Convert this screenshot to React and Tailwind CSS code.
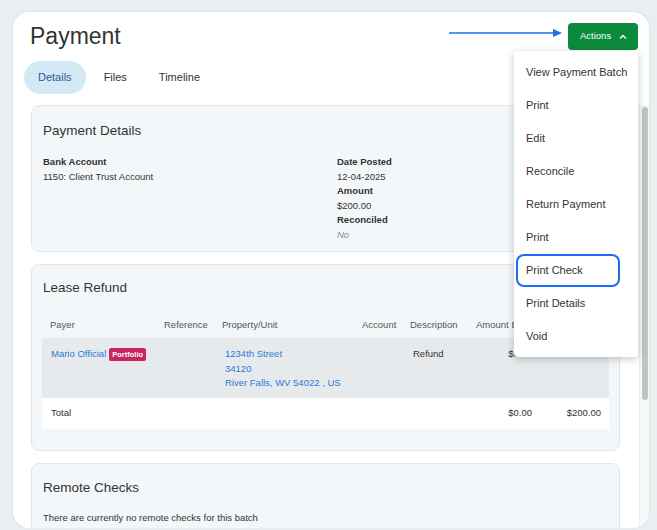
const menuItems = ['View Payment Batch', 'Print', 'Edit', 'Reconcile', 'Return Payment', 'Print', 'Print Check', 'Print Details', 'Void'];

const cols = 'grid grid-cols-[114px_58px_140px_48px_66px_72px_69px]';

export default function App() {
  return (
    <div className="w-[657px] h-[530px] bg-[#e9eef2] pt-[12px] pl-[13px] pr-[8px] font-['Liberation_Sans',Arial,sans-serif] text-[#333]">
      <div className="relative w-[636px] h-[516px] bg-white rounded-[16px] shadow-[0_0_3px_rgba(0,0,0,0.08)] flex flex-col overflow-hidden">
        <div className="flex items-start justify-between pl-[17px] pr-[11px] pt-[11px]">
          <h1 className="text-[23px] leading-[27px] text-[#333]">Payment</h1>
          <div className="flex items-start">
            <svg width="114" height="27" viewBox="0 0 114 27" className="mr-[5px]">
              <line x1="0" y1="10" x2="106" y2="10" stroke="#1f6cf0" strokeWidth="1.6" />
              <path d="M104 6 L113 10 L104 14 Z" fill="#1f6cf0" />
            </svg>
            <button className="h-[27px] w-[70px] rounded-[4px] bg-[#0b8a3d] text-white text-[9.5px] flex items-center pl-[12px]">
              Actions
              <svg width="8" height="6" viewBox="0 0 8 6" className="ml-[8px]">
                <path d="M1 4.5 L4 1.5 L7 4.5" fill="none" stroke="white" strokeWidth="1.3" />
              </svg>
            </button>
          </div>
        </div>

        <div className="flex gap-[4px] px-[11px] mt-[11px] text-[11px]">
          <div className="h-[33px] px-[14px] rounded-full bg-[#d4e8f5] text-[#2b5f93] flex items-center">Details</div>
          <div className="h-[33px] px-[14px] rounded-full flex items-center text-[#333]">Files</div>
          <div className="h-[33px] px-[14px] rounded-full flex items-center text-[#333]">Timeline</div>
        </div>

        <div className="flex flex-1 min-h-0 mt-[11px]">
          <div className="flex-1 min-w-0 overflow-hidden pl-[18px] pr-[19px] flex flex-col gap-[12px]">
            <section className="shrink-0 rounded-[8px] border border-[#e2e6ea] bg-[#f4f7fa] px-[11px] pt-[16px] pb-[9px]">
              <h2 className="text-[13.5px] leading-[18px]">Payment Details</h2>
              <div className="grid grid-cols-[294px_1fr] mt-[15px] text-[9.5px] leading-[14.5px]">
                <div>
                  <div className="font-bold">Bank Account</div>
                  <div>1150: Client Trust Account</div>
                </div>
                <div>
                  <div className="font-bold">Date Posted</div>
                  <div>12-04-2025</div>
                  <div className="font-bold">Amount</div>
                  <div>$200.00</div>
                  <div className="font-bold">Reconciled</div>
                  <div className="italic text-[#8a8a8a]">No</div>
                </div>
              </div>
            </section>

            <section className="shrink-0 rounded-[8px] border border-[#e2e6ea] bg-[#f4f7fa] px-[10px] pt-[14px] pb-[21px]">
              <h2 className="text-[13.5px] leading-[18px] pl-[1px]">Lease Refund</h2>
              <div className="mt-[15px] text-[9.5px]">
                <div className={`${cols} h-[26px] items-center text-[#555] whitespace-nowrap`}>
                  <div className="pl-[8px]">Payer</div>
                  <div className="pl-[8px]">Reference</div>
                  <div className="pl-[8px]">Property/Unit</div>
                  <div className="pl-[8px]">Account</div>
                  <div className="pl-[8px]">Description</div>
                  <div className="pl-[8px]">Amount Balance</div>
                  <div />
                </div>
                <div className={`${cols} h-[60px] bg-[#e7eaed] pt-[9px] leading-[14.5px]`}>
                  <div className="pl-[9px] flex items-start">
                    <span className="text-[#2a7ad5]">Mario Official</span>
                    <span className="ml-[3px] mt-[1px] h-[13px] px-[3px] rounded-[2px] bg-[#c9255e] text-white text-[7.5px] font-bold leading-[13px]">Portfolio</span>
                  </div>
                  <div />
                  <div className="pl-[11px] text-[#2a7ad5] whitespace-nowrap">
                    <div>1234th Street</div>
                    <div>34120</div>
                    <div>River Falls, WV 54022 , US</div>
                  </div>
                  <div />
                  <div className="pl-[11px]">Refund</div>
                  <div className="pr-[8px] text-right">$0.00</div>
                  <div />
                </div>
                <div className={`${cols} h-[31px] bg-white items-center`}>
                  <div className="pl-[9px]">Total</div>
                  <div />
                  <div />
                  <div />
                  <div />
                  <div className="pr-[8px] text-right">$0.00</div>
                  <div className="pr-[8px] text-right">$200.00</div>
                </div>
              </div>
            </section>

            <section className="shrink-0 rounded-[8px] border border-[#e2e6ea] bg-[#f4f7fa] px-[11px] pt-[15px] pb-[20px]">
              <h2 className="text-[13.5px] leading-[18px]">Remote Checks</h2>
              <p className="mt-[14px] text-[9.5px] leading-[14.5px]">There are currently no remote checks for this batch</p>
            </section>
          </div>

          <div className="w-[10px] shrink-0 bg-[#f8f8f8] border-l border-[#ececec] pt-[2px] pl-[2px]">
            <div className="w-[6px] h-[293px] rounded-full bg-[#c3c3c3]" />
          </div>
        </div>

        <div className="absolute top-[39px] right-[11px] w-[124px] bg-white rounded-[4px] shadow-[0_2px_8px_rgba(0,0,0,0.22)] pt-[5px] pb-[4px] text-[11px] text-[#333]">
          {menuItems.map((item, i) => (
            <div
              key={i}
              className={
                i === 6
                  ? 'h-[33px] w-[104px] ml-[2px] pl-[10px] flex items-center rounded-[8px] ring-2 ring-inset ring-[#1b6ef3]'
                  : 'h-[33px] pl-[12px] flex items-center whitespace-nowrap'
              }
            >
              {item}
            </div>
          ))}
        </div>
      </div>
    </div>
  );
}
